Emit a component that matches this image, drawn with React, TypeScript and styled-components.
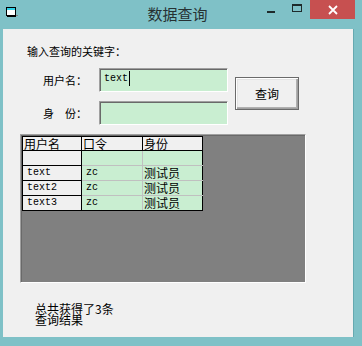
import React from "react";
import styled, { createGlobalStyle } from "styled-components";

const Global = createGlobalStyle`
  html, body { margin: 0; padding: 0; background: #7fc1c7; }
  body { font-family: "Noto Sans CJK SC", "Noto Sans", sans-serif; }
  * { box-sizing: border-box; }
`;

const CJK = `"Noto Sans CJK SC", "Noto Sans", sans-serif`;
const MONO = `"Liberation Mono", "DejaVu Sans Mono", monospace`;
const GREEN = "#c9eed1";

const Frame = styled.div`
  width: 362px;
  height: 346px;
  background: #7fc1c7;
  display: flex;
  flex-direction: column;
  overflow: hidden;
`;

const TitleBar = styled.div`
  height: 29px;
  display: grid;
  grid-template-columns: 1fr auto 1fr;
  padding-right: 7px;
  align-items: start;
`;

const IconSlot = styled.div`
  padding: 7px 0 0 6px;
  display: flex;
`;

const Title = styled.div`
  font-family: ${CJK};
  font-size: 15px;
  line-height: 28px;
  color: #263133;
`;

const Controls = styled.div`
  display: flex;
  justify-content: flex-end;
  height: 19px;
`;

const Ctl = styled.div<{ $w: number; $bg?: string }>`
  width: ${(p) => p.$w}px;
  height: 19px;
  background: ${(p) => p.$bg || "transparent"};
  display: flex;
  align-items: center;
  justify-content: center;
`;

const MinGlyph = styled.div`
  width: 8px;
  height: 2px;
  background: #1e2a2b;
  margin-top: 5px;
`;

const MaxGlyph = styled.div`
  width: 10px;
  height: 8px;
  border: 1px solid #1e2a2b;
  border-top-width: 2px;
  margin-top: -4px;
`;

const Body = styled.div`
  display: flex;
  padding-left: 3px;
`;

const Client = styled.div`
  width: 351px;
  height: 308px;
  background: #f0f0f0;
  display: flex;
  flex-direction: column;
  border-right: 1px solid #66a9b0;
`;

const Prompt = styled.div`
  font-family: ${CJK};
  font-size: 11px;
  line-height: 14px;
  color: #000;
  margin: 15px 0 0 24px;
`;

const FormArea = styled.div`
  display: flex;
  align-items: flex-start;
  margin-top: 10px;
`;

const Fields = styled.div`
  display: grid;
  grid-template-columns: 56px 129px;
  row-gap: 9px;
  margin-left: 40px;
  align-items: center;
`;

const Label = styled.div`
  font-family: ${CJK};
  font-size: 11px;
  line-height: 14px;
  color: #000;
  white-space: pre;
`;

const TextBox = styled.div`
  height: 24px;
  background: ${GREEN};
  border: 1px solid;
  border-color: #a0a0a0 #ffffff #ffffff #a0a0a0;
  box-shadow: inset 1px 1px 0 #696969;
  padding: 3px 0 0 4px;
  display: flex;
  align-items: flex-start;
  font-family: ${MONO};
  font-size: 10px;
  line-height: 14px;
  color: #000;
`;

const Caret = styled.span`
  display: inline-block;
  width: 1px;
  height: 15px;
  background: #000;
  margin-left: 1px;
  margin-top: -1px;
`;

const Button = styled.div`
  width: 64px;
  height: 33px;
  margin: 9px 0 0 7px;
  background: #f0f0f0;
  border: 1px solid #6a6a6a;
  box-shadow: inset 1px 1px 0 #ffffff, inset -1px -1px 0 #a0a0a0,
    inset -2px -2px 0 #b0b0b0, inset 2px 2px 0 #e3e3e3;
  display: flex;
  align-items: center;
  justify-content: center;
  font-family: ${CJK};
  font-size: 12px;
  color: #000;
`;

const GridView = styled.div`
  width: 286px;
  height: 149px;
  margin: 9px 0 0 17px;
  background: #808080;
  border-top: 1px solid #a0a0a0;
  border-left: 1px solid #a0a0a0;
  border-right: 1px solid #ffffff;
  border-bottom: 1px solid #ffffff;
  box-shadow: inset 1px 1px 0 #696969;
  padding: 1px 0 0 1px;
`;

const Table = styled.table`
  border-collapse: collapse;
  table-layout: fixed;
  width: 180px;
  border: 1px solid #000;
`;

const Th = styled.th<{ $w: number }>`
  width: ${(p) => p.$w}px;
  height: 14px;
  padding: 0 0 0 1px;
  background: #f0f0f0;
  border-right: 1px solid #000;
  border-bottom: 1px solid #000;
  font-family: ${CJK};
  font-size: 12px;
  line-height: 13px;
  font-weight: normal;
  text-align: left;
  vertical-align: bottom;
  color: #000;
`;

const Td = styled.td<{ $head?: boolean; $mono?: boolean }>`
  height: 15px;
  padding: 0 0 0 ${(p) => (p.$mono ? 4 : 1)}px;
  background: ${(p) => (p.$head ? "#f0f0f0" : GREEN)};
  border-right: 1px solid ${(p) => (p.$head ? "#000" : "#c0c0c0")};
  border-bottom: 1px solid ${(p) => (p.$head ? "#000" : "#c0c0c0")};
  font-family: ${(p) => (p.$mono ? MONO : CJK)};
  font-size: ${(p) => (p.$mono ? 10 : 12)}px;
  line-height: 14px;
  vertical-align: bottom;
  color: #000;
  white-space: nowrap;
  &:last-child { border-right-color: #000; }
`;

const Tr = styled.tr`
  &:last-child td { border-bottom-color: #000; }
`;

const Footer = styled.div`
  margin: 20px 0 0 32px;
  font-family: ${CJK};
  font-size: 12px;
  color: #000;
  display: flex;
  flex-direction: column;
`;

const FooterLine = styled.span`
  display: block;
  height: 11px;
  line-height: 11px;
`;

const AppIcon = () => (
  <svg width="12" height="11" viewBox="0 0 12 11">
    <rect x="0.5" y="0.5" width="9" height="8" fill="#fff" stroke="#000" />
    <rect x="1" y="1" width="8" height="2" fill="#2fd0e6" />
    <rect x="0" y="0" width="4" height="1" fill="#000" />
    <rect x="10" y="8" width="2" height="1" fill="#808080" />
    <rect x="1" y="9" width="9" height="1" fill="#000" />
  </svg>
);

const CloseGlyph = () => (
  <svg width="10" height="10" viewBox="0 0 10 10">
    <path d="M1 1 L9 9 M9 1 L1 9" stroke="#fff" strokeWidth="1.8" />
  </svg>
);

const rows = [
  { name: "", pw: "", role: "" },
  { name: "text", pw: "zc", role: "测试员" },
  { name: "text2", pw: "zc", role: "测试员" },
  { name: "text3", pw: "zc", role: "测试员" },
];

export default function App() {
  return (
    <>
      <Global />
      <Frame>
        <TitleBar>
          <IconSlot>
            <AppIcon />
          </IconSlot>
          <Title>数据查询</Title>
          <Controls>
            <Ctl $w={25}>
              <MinGlyph />
            </Ctl>
            <Ctl $w={27}>
              <MaxGlyph />
            </Ctl>
            <Ctl $w={45} $bg="#c75050">
              <CloseGlyph />
            </Ctl>
          </Controls>
        </TitleBar>
        <Body>
          <Client>
            <Prompt>输入查询的关键字：</Prompt>
            <FormArea>
              <Fields>
                <Label>用户名：</Label>
                <TextBox>
                  text
                  <Caret />
                </TextBox>
                <Label>身　份：</Label>
                <TextBox />
              </Fields>
              <Button>查询</Button>
            </FormArea>
            <GridView>
              <Table>
                <thead>
                  <tr>
                    <Th $w={59}>用户名</Th>
                    <Th $w={61}>口令</Th>
                    <Th $w={60}>身份</Th>
                  </tr>
                </thead>
                <tbody>
                  {rows.map((r, i) => (
                    <Tr key={i}>
                      <Td $head $mono>
                        {r.name}
                      </Td>
                      <Td $mono>{r.pw}</Td>
                      <Td>{r.role}</Td>
                    </Tr>
                  ))}
                </tbody>
              </Table>
            </GridView>
            <Footer>
              <FooterLine>总共获得了3条</FooterLine>
              <FooterLine>查询结果</FooterLine>
            </Footer>
          </Client>
        </Body>
      </Frame>
    </>
  );
}
